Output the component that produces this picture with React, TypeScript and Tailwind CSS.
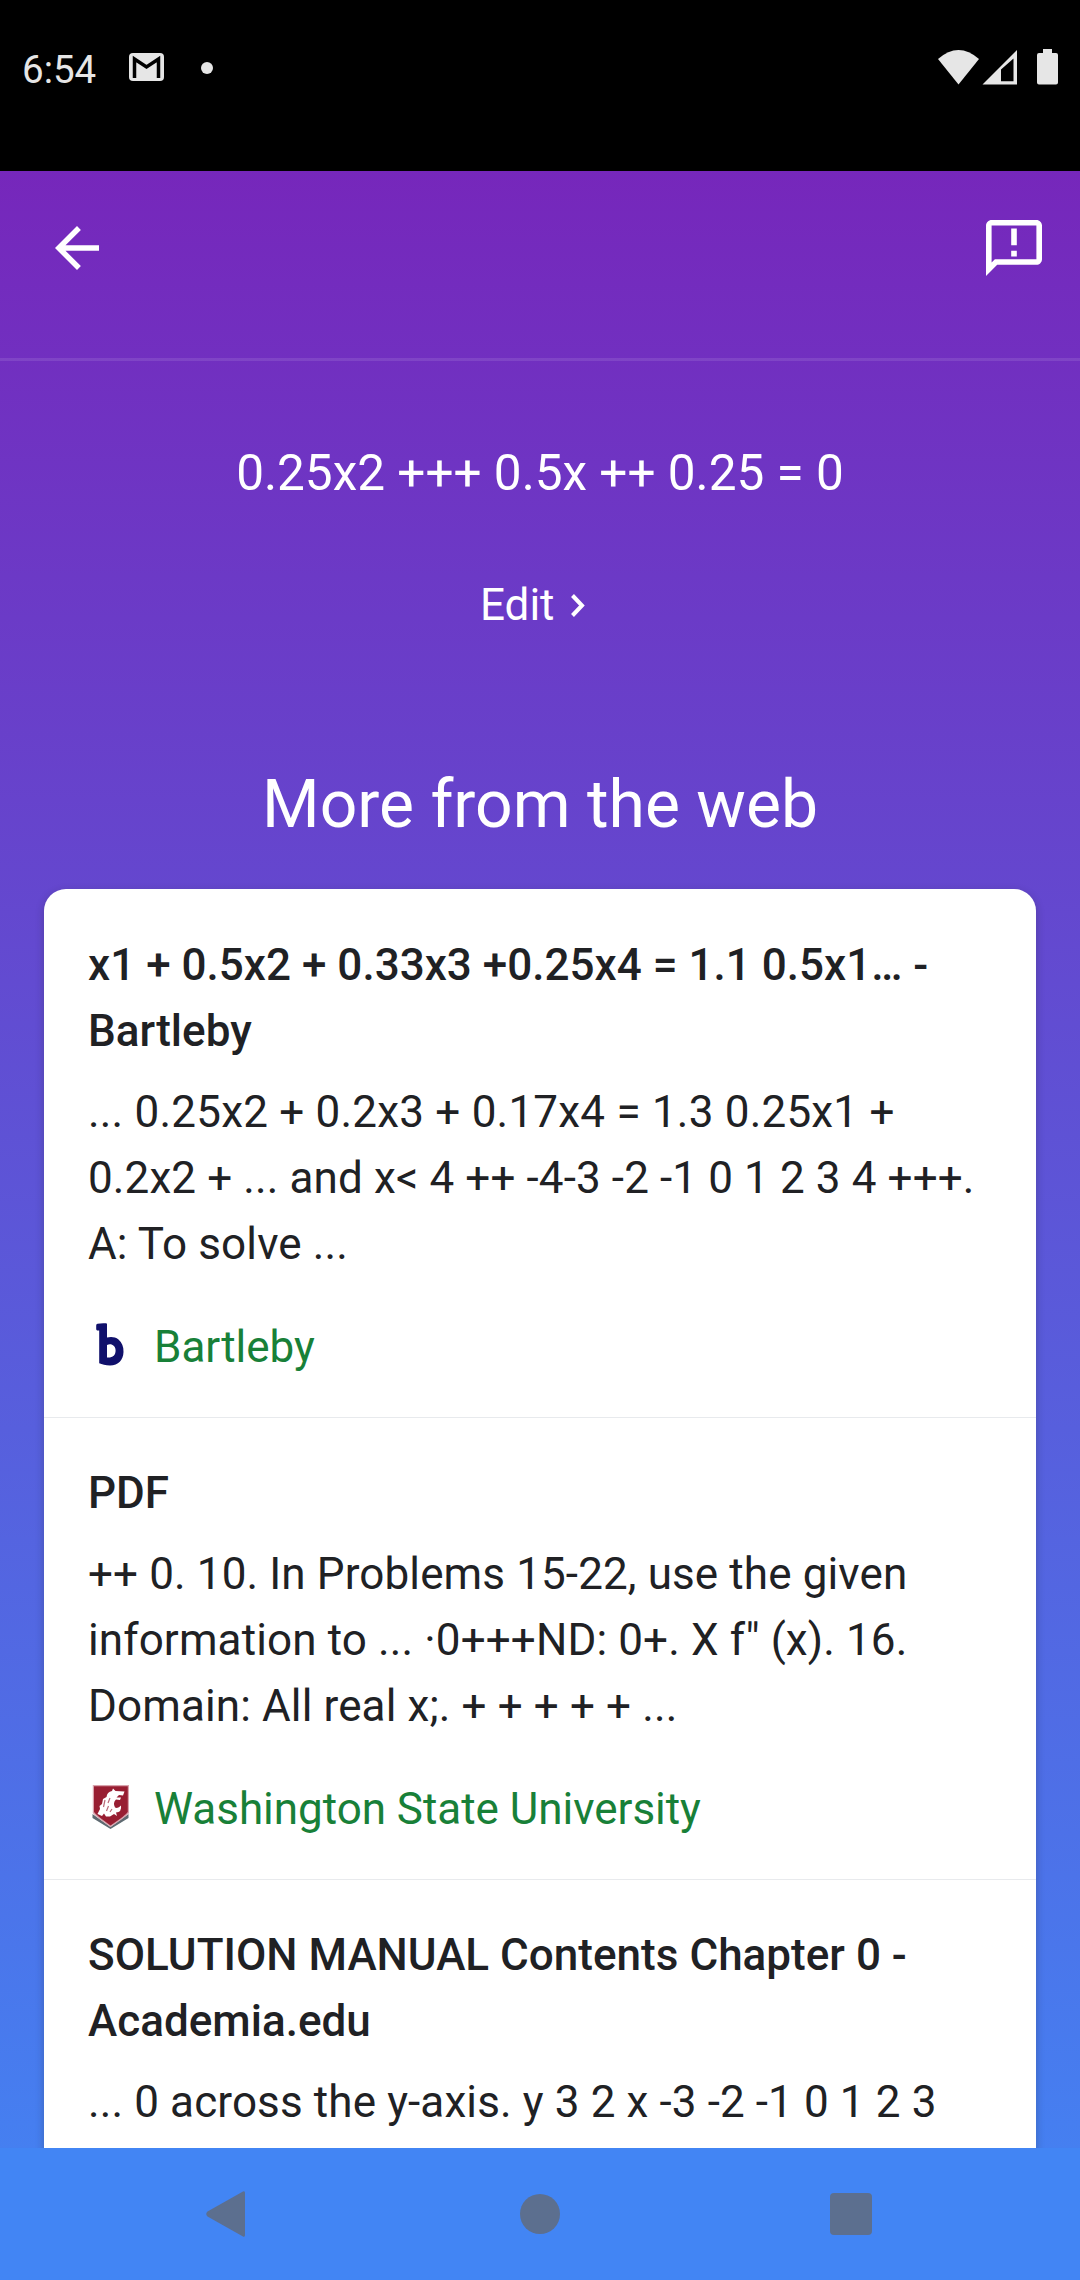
import React from 'react';

const items = [
  {
    title: ['x1 + 0.5x2 + 0.33x3 +0.25x4 = 1.1 0.5x1… -', 'Bartleby'],
    text: ['... 0.25x2 + 0.2x3 + 0.17x4 = 1.3 0.25x1 +', '0.2x2 + ... and x< 4 ++ -4-3 -2 -1 0 1 2 3 4 +++.', 'A: To solve ...'],
    source: 'Bartleby',
  },
  {
    title: ['PDF'],
    text: ['++ 0. 10. In Problems 15-22, use the given', 'information to ... ·0+++ND: 0+. X f" (x). 16.', 'Domain: All real x;. + + + + + ...'],
    source: 'Washington State University',
  },
  {
    title: ['SOLUTION MANUAL Contents Chapter 0 -', 'Academia.edu'],
    text: ['... 0 across the y-axis. y 3 2 x -3 -2 -1 0 1 2 3'],
    source: '',
  },
];

function SourceIcon({ name }: { name: string }) {
  if (name === 'Bartleby')
    return (
      <svg className="-mt-[4px]" width="44" height="44" viewBox="0 0 44 44">
        <path fillRule="evenodd" fill="#10106b" d="M9.5 .8Q13 0 18 .3Q19 .4 19 1.5V14.5C22 13.6 27 13.4 30.5 16.5C34 19.5 35.7 24 35.5 29C35.2 37 30.5 42.5 22 42.5C17.5 42.5 14 41.5 11.2 40.3V7.5H9.2Q8.2 7.3 8.2 6V2.5Q8.2 1.1 9.5 .8ZM19 22V34.5C24.5 35 27.6 32.5 27.6 27.5C27.6 22.5 23 20 19 22Z" />
      </svg>
    );
  return (
    <svg className="-mt-[5px]" width="44" height="44" viewBox="0 0 44 44">
      <path d="M4.5 29L22.5 42L40.5 29V33L22.5 44L4.500 33Z" fill="#5e6a71" />
      <path d="M4.800 0H41V28Q39 31 22.500 42Q7 31 4.800 28Z" fill="#d9a3ad" />
      <path d="M6 1.200H39.800V27Q38 30 22.500 40.500Q8 30 6 27Z" fill="#981e32" />
      <path d="M9.500 29L12 24L11.500 21L14 19L15 14L18.500 12Q19 7 24 6L25 3.500L27.500 6L36.500 6.500L35 10.500L31 10L28.500 12.500L33 12.500L32 15L28 14.500Q24.500 18 27 22.500Q30 24 33 20.500Q34 27 28 27.500L29 31L26 29L22 31.500H18L16 28.500L14 31Z" fill="#fff" />
      <path d="M17 15L15.500 22M20.500 21L18.500 26M22 13L20 18M24 24L22 27" stroke="#b86a77" strokeWidth="1.200" />
    </svg>
  );
}

export default function App() {
  return (
    <div className="flex h-[2280px] w-[1080px] flex-col overflow-hidden bg-[#4285f4] font-['Roboto',sans-serif]">
      <div className="flex h-[171px] shrink-0 items-start justify-between bg-black text-[#e6e6e6]">
        <div className="flex h-[138px] items-center pl-[22px] text-[38.5px]">
          <span className="mt-[2px] w-[107px]">6:54</span>
          <svg className="-mt-[4px]" width="35" height="28" viewBox="0 0 35 28">
            <rect width="35" height="28" rx="4" fill="#e6e6e6" />
            <path d="M5.500 25V6L17.500 14L29.500 6V25" fill="none" stroke="#000" strokeWidth="3.500" />
          </svg>
          <span className="-mt-[3px] ml-[37px] size-[12px] rounded-full bg-[#e6e6e6]" />
        </div>
        <svg className="mt-[48px] mr-[21px]" width="121" height="38" viewBox="0 0 121 38" fill="#e6e6e6">
          <path d="M0 11Q20.500 -7 41 11L20.500 36.500Z" />
          <path fillRule="evenodd" d="M44.500 36.500L79 2V36.500ZM63 21.500V33.300H75.500V10.500Z" />
          <path d="M105 1H114V5H118Q120 5 120 7V34.500Q120 36.500 118 36.500H101Q99 36.500 99 34.500V7Q99 5 101 5H105Z" />
        </svg>
      </div>
      <div className="flex h-[2109px] shrink-0 flex-col bg-linear-to-b/srgb from-[#7627bb] to-[#4285f4]">
        <main className="flex h-[1977px] shrink-0 flex-col overflow-hidden text-white">
          <header className="flex h-[190px] shrink-0 items-start justify-between border-b-[3px] border-white/10 pr-[38px] pl-[55px]">
            <svg className="mt-[55px]" width="44" height="44" viewBox="4 4 16 16" fill="#fff">
              <path d="M20 11H7.830l5.590-5.590L12 4l-8 8 8 8 1.410-1.410L7.830 13H20v-2z" />
            </svg>
            <svg className="mt-[49px]" width="56" height="56" viewBox="2 2 20 20" fill="#fff">
              <path d="M20 2H4.010c-1.100 0-2 .9-2 2L2 22l4-4h14c1.100 0 2-.9 2-2V4c0-1.100-.9-2-2-2zm0 14H5.170L4 17.170V4h16v12zM11 5h2v6h-2zm0 8h2v2h-2z" />
            </svg>
          </header>
          <h1 className="mt-[79px] text-center text-[49.500px] leading-[66px]">0.25x2 +++ 0.5x ++ 0.25 = 0</h1>
          <button className="mt-[69px] ml-[480px] flex h-[60px] items-center gap-[16px] self-start text-[44px]">
            Edit
            <svg className="mt-[1px]" width="14" height="23" viewBox="0 0 14 23" fill="none" stroke="#fff" strokeWidth="4">
              <path d="M1.500 1.500L11 11.500L1.500 21.500" />
            </svg>
          </button>
          <h2 className="mt-[126px] text-center text-[66px] leading-[88px]">More from the web</h2>
          <div className="mx-[44px] mt-[40px] rounded-t-[22px] bg-white text-[44px] leading-[66px] text-[#202124] shadow-[0_3px_8px_rgba(32,33,36,0.28)]">
            {items.map((it) => (
              <section key={it.title[0]} className="border-t border-[#e8eaed] px-[44px] pt-[42px] pb-[37px] first:border-t-0 first:pt-[43px]">
                <h3 className="font-medium tracking-[0.020px]">
                  {it.title.map((t) => (
                    <div key={t} className="whitespace-nowrap">{t}</div>
                  ))}
                </h3>
                <div className="mt-[15px] tracking-[0.120px]">
                  {it.text.map((t) => (
                    <div key={t} className={t.startsWith('... 0.25x2') ? 'whitespace-nowrap tracking-[0.210px]' : 'whitespace-nowrap'}>{t}</div>
                  ))}
                </div>
                {it.source && (
                  <div className="mt-[37px] flex items-center gap-[22px] tracking-[-0.030px] text-[#188038]">
                    <SourceIcon name={it.source} />
                    {it.source}
                  </div>
                )}
              </section>
            ))}
          </div>
        </main>
        <nav className="flex h-[132px] shrink-0 items-center justify-between bg-[#4285f4] pr-[208px] pl-[206px]">
          <svg width="40" height="46" viewBox="0 0 40 46" fill="#5c6f8f">
            <path d="M1.500 20.500L37 .5Q39 -.5 39 2V44Q39 46.500 37 45.500L1.500 25.500Q-1 23 1.500 20.500Z" />
          </svg>
          <span className="ml-[3px] size-[40px] rounded-full bg-[#5c6f8f]" />
          <span className="size-[42px] rounded-[4px] bg-[#5c6f8f]" />
        </nav>
      </div>
    </div>
  );
}
